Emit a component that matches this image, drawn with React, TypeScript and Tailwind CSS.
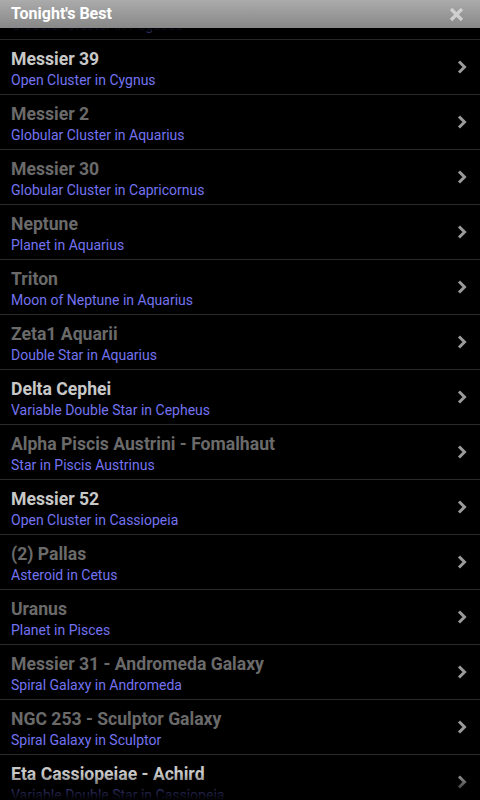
import React from 'react';

interface SkyObject {
  name: string;
  desc: string;
  bright?: boolean;
}

const objects: SkyObject[] = [
  { name: 'Messier 15', desc: 'Globular Cluster in Pegasus' },
  { name: 'Messier 39', desc: 'Open Cluster in Cygnus', bright: true },
  { name: 'Messier 2', desc: 'Globular Cluster in Aquarius' },
  { name: 'Messier 30', desc: 'Globular Cluster in Capricornus' },
  { name: 'Neptune', desc: 'Planet in Aquarius' },
  { name: 'Triton', desc: 'Moon of Neptune in Aquarius' },
  { name: 'Zeta1 Aquarii', desc: 'Double Star in Aquarius' },
  { name: 'Delta Cephei', desc: 'Variable Double Star in Cepheus', bright: true },
  { name: 'Alpha Piscis Austrini - Fomalhaut', desc: 'Star in Piscis Austrinus' },
  { name: 'Messier 52', desc: 'Open Cluster in Cassiopeia', bright: true },
  { name: '(2) Pallas', desc: 'Asteroid in Cetus' },
  { name: 'Uranus', desc: 'Planet in Pisces' },
  { name: 'Messier 31 - Andromeda Galaxy', desc: 'Spiral Galaxy in Andromeda' },
  { name: 'NGC 253 - Sculptor Galaxy', desc: 'Spiral Galaxy in Sculptor' },
  { name: 'Eta Cassiopeiae - Achird', desc: 'Variable Double Star in Cassiopeia', bright: true },
];

const Chevron = () => (
  <svg width="12" height="16" viewBox="0 0 12 16" className="shrink-0">
    <path d="M3 2.5 L8.5 8 L3 13.5" fill="none" stroke="#9a9a9a" strokeWidth="3" />
  </svg>
);

export default function App() {
  return (
    <div
      className="relative w-[480px] h-[800px] overflow-hidden bg-black"
      style={{ fontFamily: 'Roboto, "Noto Sans", sans-serif' }}
    >
      <div className="-mt-[15px]">
        {objects.map((o) => (
          <div key={o.name} className="flex items-center h-[55px] border-b border-[#2a2a2a] pl-[11px] pr-[12px]">
            <div className="flex-1 min-w-0 pt-[4px]">
              <div className={`text-[17.6px] leading-[22px] font-bold truncate ${o.bright ? 'text-[#c8c8c8]' : 'text-[#6a6a6a]'}`}>
                {o.name}
              </div>
              <div className="text-[14px] leading-[20px] text-[#7373f2] truncate">{o.desc}</div>
            </div>
            <Chevron />
          </div>
        ))}
      </div>

      {/* fading edges */}
      <div className="absolute left-0 right-0 top-[28px] h-[12px] bg-gradient-to-b from-black to-transparent" />
      <div className="absolute left-0 right-0 bottom-0 h-[26px] bg-gradient-to-t from-black to-transparent" />

      <div className="absolute top-0 left-0 right-0 h-[28px] flex items-center justify-between pl-[11px] pr-[16px] bg-gradient-to-b from-[#ababab] to-[#888888]">
        <span className="text-white text-[16px] font-bold">Tonight's Best</span>
        <svg width="15" height="15" viewBox="0 0 15 15">
          <path d="M2 2 L13 13 M13 2 L2 13" stroke="#cfcfcf" strokeWidth="3.2" />
        </svg>
      </div>
    </div>
  );
}
